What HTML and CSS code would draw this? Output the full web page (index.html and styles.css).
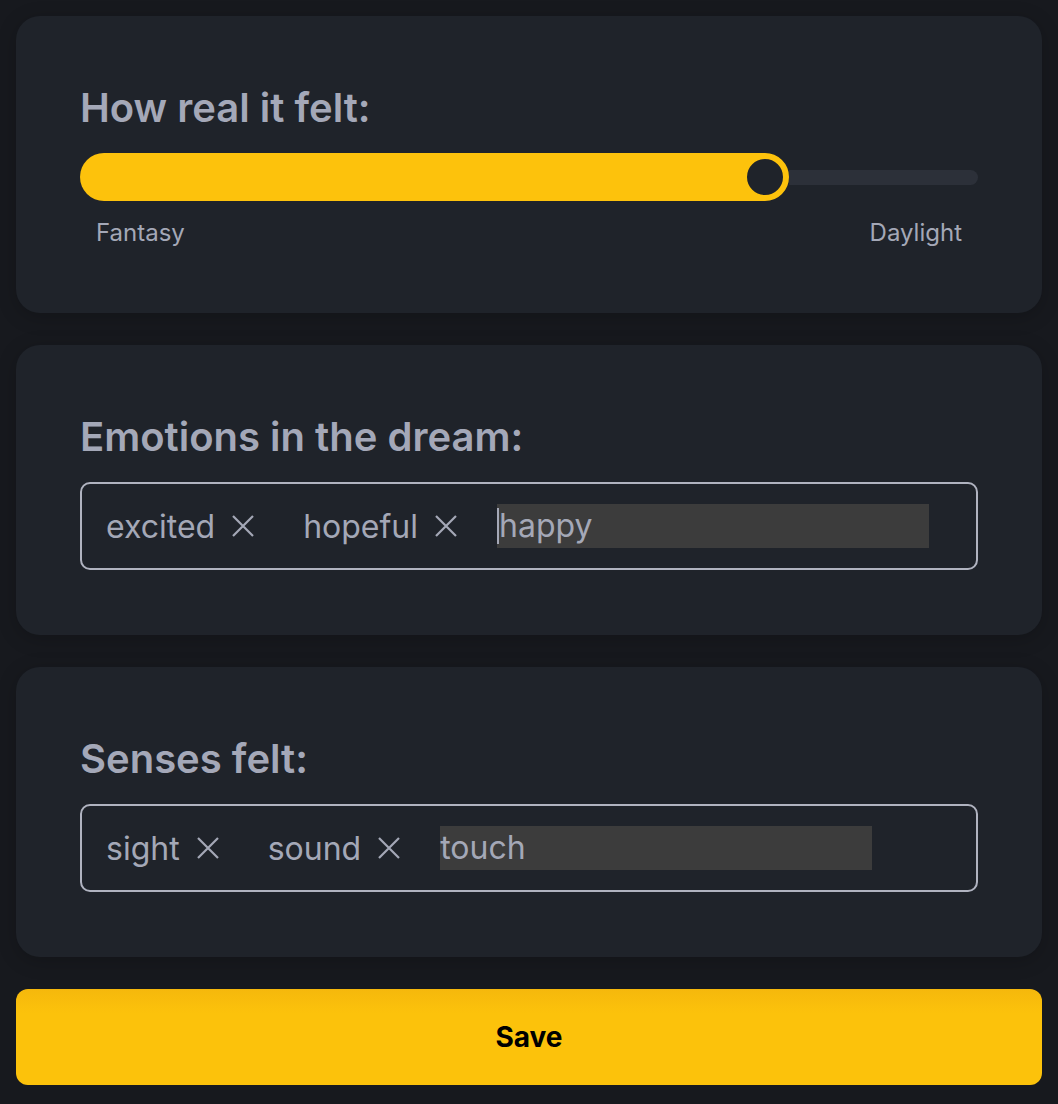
FILE: index.html
```html
<!DOCTYPE html>
<html>
<head>
    <meta charset="utf-8" />
    <title>Dream details</title>
    <link rel="stylesheet" href="styles.css">
</head>
<body>
    <div class="page">
        <section class="card">
            <h2 class="card-title">How real it felt:</h2>
            <div class="slider">
                <div class="slider-fill"></div>
                <div class="slider-thumb"></div>
                <div class="slider-rest"></div>
            </div>
            <div class="slider-labels">
                <span>Fantasy</span>
                <span>Daylight</span>
            </div>
        </section>

        <section class="card card-tags">
            <h2 class="card-title">Emotions in the dream:</h2>
            <div class="tag-box">
                <span class="tag">excited
                    <svg class="tag-x" viewBox="0 0 24 24"><path d="M2 2L22 22M22 2L2 22" /></svg>
                </span>
                <span class="tag">hopeful
                    <svg class="tag-x" viewBox="0 0 24 24"><path d="M2 2L22 22M22 2L2 22" /></svg>
                </span>
                <span class="tag-input"><span class="caret"></span>happy</span>
            </div>
        </section>

        <section class="card card-tags">
            <h2 class="card-title">Senses felt:</h2>
            <div class="tag-box">
                <span class="tag">sight
                    <svg class="tag-x" viewBox="0 0 24 24"><path d="M2 2L22 22M22 2L2 22" /></svg>
                </span>
                <span class="tag">sound
                    <svg class="tag-x" viewBox="0 0 24 24"><path d="M2 2L22 22M22 2L2 22" /></svg>
                </span>
                <span class="tag-input">touch</span>
            </div>
        </section>

        <button class="save-btn">Save</button>
    </div>
</body>
</html>
```

FILE: styles.css
```css
body {
    margin: 0;
    background-color: #17191e;
    font-family: Inter, "Noto Sans", sans-serif;
    color: #a4a8b7;
}

.page {
    padding: 16px;
    display: flex;
    flex-direction: column;
    gap: 32px;
}

.card {
    background-color: #1f232a;
    border-radius: 24px;
    padding: 64px;
    box-shadow: 0 4px 20px rgba(0, 0, 0, 0.2);
}
.card-tags {
    padding-bottom: 65px;
}

.card-title {
    margin: 0 0 17px 0;
    font-size: 40px;
    line-height: 56px;
    font-weight: 600;
    color: #a4a8b8;
}

/* slider */
.slider {
    display: flex;
    align-items: center;
    height: 48px;
}
.slider-fill {
    width: 685px;
    height: 48px;
    background-color: #fdc20c;
    border-radius: 24px 0 0 24px;
}
.slider-thumb {
    flex-shrink: 0;
    width: 36px;
    height: 36px;
    margin-left: -24px;
    border: 6px solid #fdc20c;
    border-radius: 50%;
    background-color: #1f232a;
}
.slider-rest {
    flex: 1;
    height: 15px;
    background-color: #2c3039;
    border-radius: 0 8px 8px 0;
}

.slider-labels {
    display: flex;
    justify-content: space-between;
    padding: 16px 16px 0 16px;
    font-size: 24px;
    line-height: 32px;
}

/* tags */
.tag-box {
    border: 2px solid #b0b3c0;
    border-radius: 10px;
    height: 84px;
    display: flex;
    align-items: center;
    gap: 40px;
    padding: 0 24px;
    font-size: 32px;
}
.tag {
    display: flex;
    align-items: center;
    gap: 16px;
    margin-right: 8px;
}
.tag-x {
    width: 24px;
    height: 24px;
    stroke: #a4a8b7;
    stroke-width: 2.2;
    fill: none;
}
.tag-input {
    width: 432px;
    height: 44px;
    line-height: 44px;
    margin-left: -9px;
    background-color: #3c3c3c;
    display: flex;
    align-items: center;
}
.caret {
    width: 2px;
    height: 36px;
    background-color: #a4a8b7;
}

.save-btn {
    height: 96px;
    border: none;
    border-radius: 12px;
    background: linear-gradient(#f5b80c, #fcc20b 25%);
    color: #000;
    font-family: Inter, sans-serif;
    font-size: 28px;
    font-weight: 700;
}
```
